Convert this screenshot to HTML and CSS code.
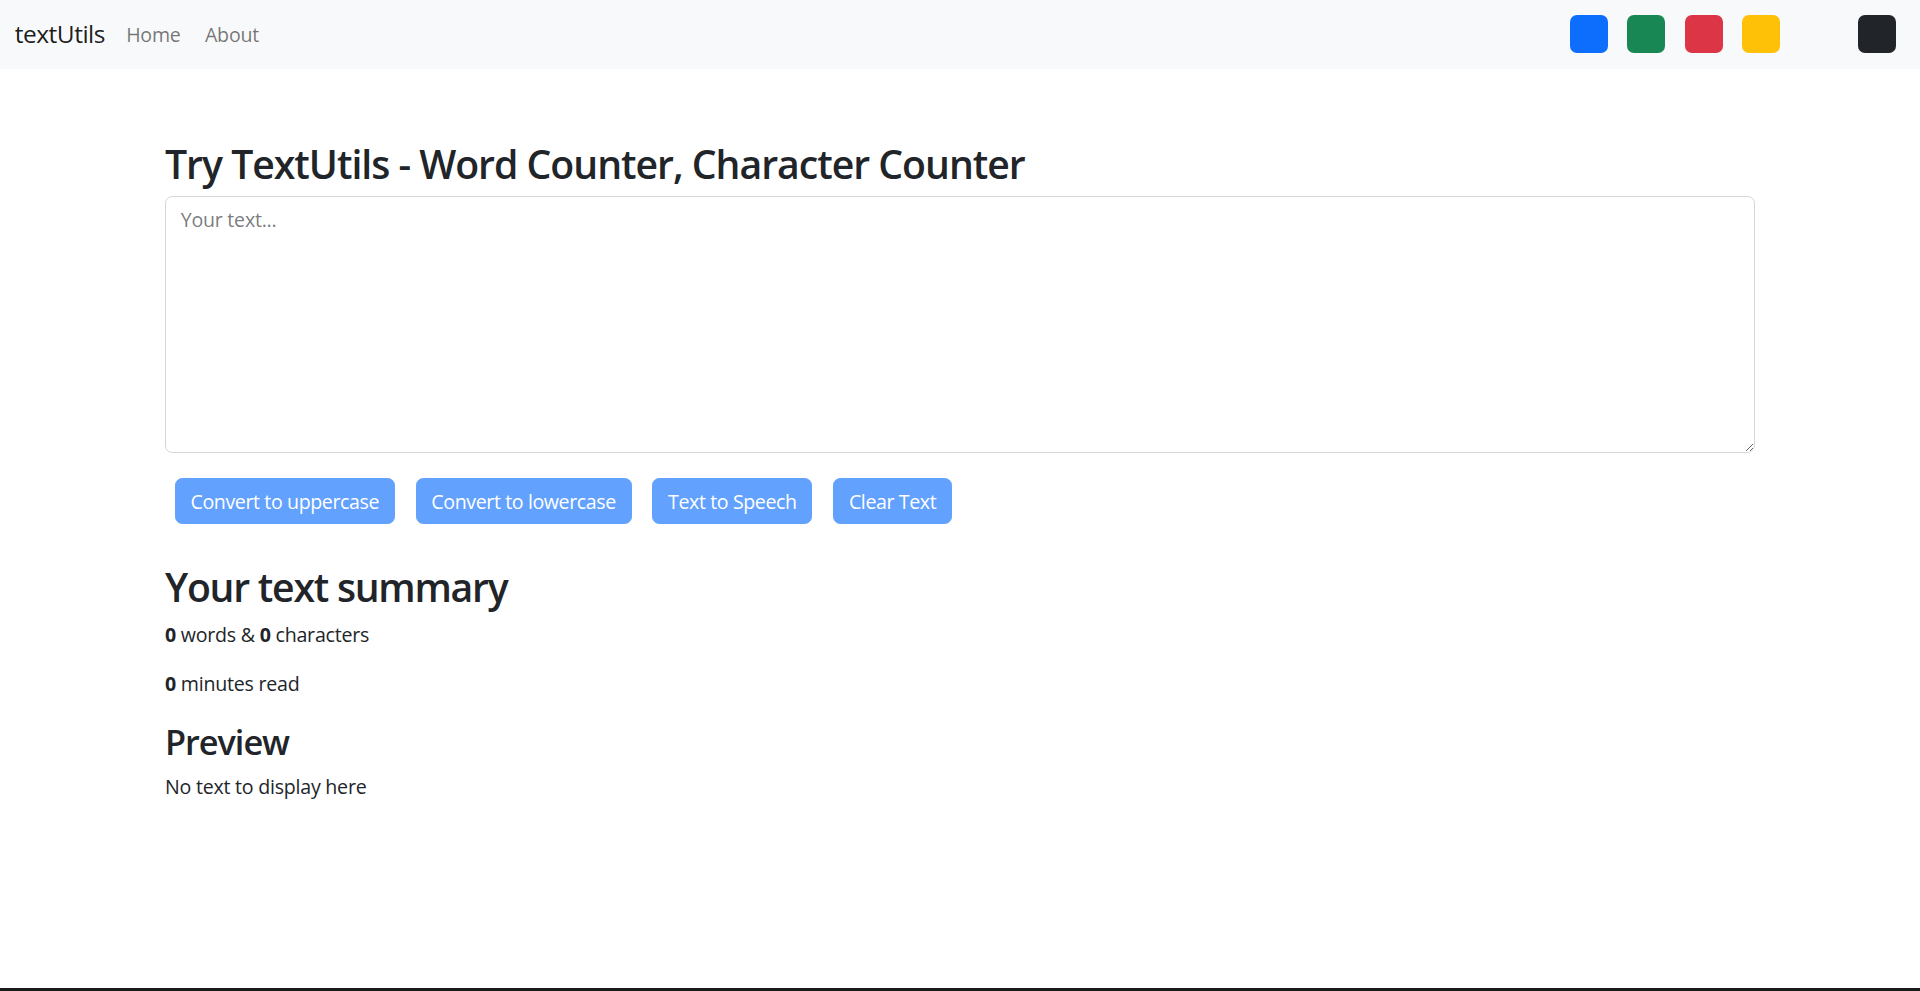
FILE: index.html
```html
<!DOCTYPE html>
<html lang="en">
<head>
<meta charset="utf-8">
<title>TextUtils</title>
<link rel="stylesheet" href="styles.css">
</head>
<body>
<nav class="navbar">
  <div class="navbar-inner">
    <a class="brand" href="#">textUtils</a>
    <ul class="nav-links">
      <li><a class="nav-link" href="#">Home</a></li>
      <li><a class="nav-link" href="#">About</a></li>
    </ul>
    <div class="swatches">
      <span class="swatch swatch-blue"></span>
      <span class="swatch swatch-green"></span>
      <span class="swatch swatch-red"></span>
      <span class="swatch swatch-yellow"></span>
      <span class="swatch swatch-light"></span>
      <span class="swatch swatch-dark"></span>
    </div>
  </div>
</nav>

<main class="page">
  <div class="container">
    <h2 class="title">Try TextUtils - Word Counter, Character Counter</h2>
    <textarea class="text-box" placeholder="Your text..."></textarea>
    <div class="actions">
      <button class="btn" disabled>Convert to uppercase</button>
      <button class="btn" disabled>Convert to lowercase</button>
      <button class="btn" disabled>Text to Speech</button>
      <button class="btn" disabled>Clear Text</button>
    </div>
  </div>
  <div class="container summary">
    <h2 class="title title-summary">Your text summary</h2>
    <p class="stat"><strong>0</strong> words &amp; <strong>0</strong> characters</p>
    <p class="stat"><strong>0</strong> minutes read</p>
    <h3 class="subtitle">Preview</h3>
    <p class="stat">No text to display here</p>
  </div>
</main>
<div class="bottom-rule"></div>
</body>
</html>
```

FILE: styles.css
```css
html {
  height: 100%;
}

body {
  margin: 0;
  min-height: 100%;
  display: flex;
  flex-direction: column;
  font-family: "Open Sans", "Noto Sans", "Liberation Sans", sans-serif;
  font-size: 19.6px;
  line-height: 1.5;
  letter-spacing: -0.012em;
  color: #212529;
  background: #ffffff;
}

/* ---------- navbar ---------- */
.navbar {
  background: #f8f9fa;
  padding: 9.8px 0;
}

.navbar-inner {
  display: flex;
  align-items: center;
  padding: 0 14.7px;
}

.brand {
  font-size: 24.5px;
  line-height: 1.5;
  padding: 6.1px 0;
  margin-right: 9px;
  color: rgba(0, 0, 0, 0.9);
  text-decoration: none;
  letter-spacing: -0.02em;
}

.nav-links {
  list-style: none;
  display: flex;
  margin: 0;
  padding: 0;
}

.nav-link {
  display: block;
  padding: 9.8px 12.2px;
  font-size: 19.6px;
  color: rgba(0, 0, 0, 0.55);
  text-decoration: none;
}

.swatches {
  margin-left: auto;
  display: flex;
  align-items: center;
}

.swatch {
  display: block;
  width: 38px;
  height: 38px;
  margin: 0 9.8px;
  border-radius: 7px;
}

.swatch-blue { background: #0d6efd; }
.swatch-green { background: #198754; }
.swatch-red { background: #dc3545; }
.swatch-yellow { background: #ffc107; }
.swatch-light { background: #f8f9fa; }
.swatch-dark { background: #212529; }

/* ---------- main ---------- */
.page {
  flex: 1;
  padding-top: 71px;
}

.container {
  width: 1620px;
  box-sizing: border-box;
  margin: 0 auto;
  padding: 0 15px;
}

.title {
  margin: 0 0 9.8px;
  font-size: 39.2px;
  font-weight: 600;
  line-height: 1.2;
  letter-spacing: -0.026em;
}

.title-summary {
  letter-spacing: -0.032em;
}

.subtitle {
  margin: 22px 0 9.8px;
  font-size: 34.3px;
  font-weight: 600;
  line-height: 1.2;
  letter-spacing: -0.03em;
}

.text-box {
  display: block;
  width: 100%;
  height: 257px;
  box-sizing: border-box;
  margin: 0;
  padding: 7.3px 14.7px;
  font-family: inherit;
  font-size: 19.6px;
  line-height: 1.5;
  letter-spacing: -0.012em;
  color: #212529;
  background: #ffffff;
  border: 1px solid #d3d7dc;
  border-radius: 7.3px;
  resize: vertical;
  outline: none;
}

.text-box::placeholder {
  color: rgba(33, 37, 41, 0.62);
}

.actions {
  display: flex;
  gap: 20.8px;
  margin-top: 25px;
  padding-left: 9.8px;
}

.btn {
  font-family: inherit;
  font-size: 19.6px;
  line-height: 1.5;
  letter-spacing: -0.02em;
  padding: 7.3px 14.7px;
  color: #ffffff;
  background: #62a1fe;
  border: 1px solid #62a1fe;
  border-radius: 7.3px;
}

.summary {
  margin-top: 39px;
}

.stat {
  margin: 0 0 19.6px;
}

.stat strong {
  font-weight: 700;
}

.bottom-rule {
  height: 3px;
  background: #1b1b1b;
}
```
